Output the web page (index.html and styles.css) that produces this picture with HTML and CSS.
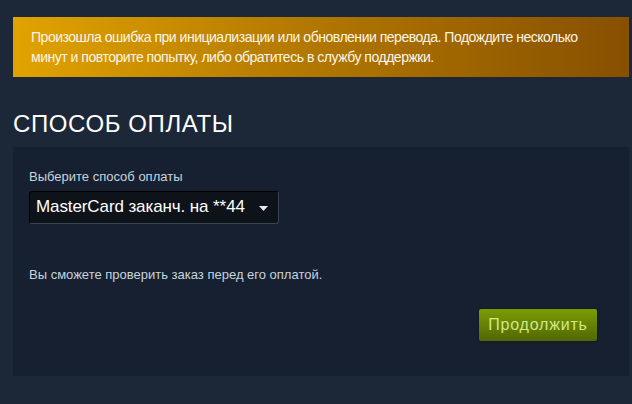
FILE: index.html
```html
<!DOCTYPE html>
<html lang="ru">
<head>
<meta charset="utf-8">
<link rel="stylesheet" href="styles.css">
</head>
<body>
<div class="page">
  <div class="error-banner">
    Произошла ошибка при инициализации или обновлении перевода. Подождите несколько минут и повторите попытку, либо обратитесь в службу поддержки.
  </div>
  <h2 class="section-title">Способ оплаты</h2>
  <div class="panel">
    <div class="field-label">Выберите способ оплаты</div>
    <div class="select">
      <span class="select-value">MasterCard заканч. на **44</span>
      <svg class="select-arrow" width="9" height="5" viewBox="0 0 9 5"><path d="M0 0h9L4.5 5z" fill="#e6e9ec"/></svg>
    </div>
    <div class="note">Вы сможете проверить заказ перед его оплатой.</div>
    <div class="actions">
      <button class="btn-green">Продолжить</button>
    </div>
  </div>
</div>
</body>
</html>
```
FILE: styles.css
```css
html, body {
  margin: 0;
  padding: 0;
  background: #1c2738;
  font-family: "Liberation Sans", Arial, sans-serif;
}
.page {
  padding: 17px 0 0 13px;
  width: 616px;
}
.error-banner {
  background: linear-gradient(to right, #e1a300 0%, #b57a00 45%, #875000 100%);
  color: #fdf6e6;
  font-size: 14px;
  letter-spacing: -0.48px;
  line-height: 20px;
  padding: 10px 30px 10px 18px;
  height: 40px;
}
.section-title {
  margin: 0;
  padding: 33px 0 0 0;
  height: 37px;
  color: #ffffff;
  font-weight: normal;
  font-size: 24px;
  line-height: 28px;
  letter-spacing: 0.6px;
  text-transform: uppercase;
}
.panel {
  background: #172030;
  height: 229px;
  box-sizing: border-box;
  padding: 22px 32px 0 16px;
  display: flex;
  flex-direction: column;
}
.field-label {
  color: #c6d4df;
  font-size: 13px;
  line-height: 16px;
  margin-bottom: 6px;
}
.select {
  width: 250px;
  height: 33px;
  box-sizing: border-box;
  background: #0e131a;
  border: 1px solid #3a4350;
  border-top-color: #000;
  border-left-color: #000;
  border-radius: 3px;
  display: flex;
  align-items: center;
  justify-content: space-between;
  padding: 0 8px 1px 6px;
}
.select-value {
  color: #ffffff;
  font-size: 17px;
  letter-spacing: -0.1px;
}
.select-arrow {
  display: block;
  margin-right: 2px;
  margin-top: 2px;
}
.note {
  margin-top: 43px;
  color: #c6d4df;
  font-size: 13px;
  line-height: 16px;
}
.actions {
  display: flex;
  justify-content: flex-end;
  margin-top: 26px;
}
.btn-green {
  width: 118px;
  height: 32px;
  border: none;
  border-radius: 2px;
  background: linear-gradient(to bottom, #7a9a05 5%, #536904 95%);
  color: #d2e885;
  font-family: "Liberation Sans", Arial, sans-serif;
  font-size: 16px;
  letter-spacing: 0.8px;
  padding: 0;
  box-shadow: 0 0 3px rgba(0,0,0,0.4);
}
```
